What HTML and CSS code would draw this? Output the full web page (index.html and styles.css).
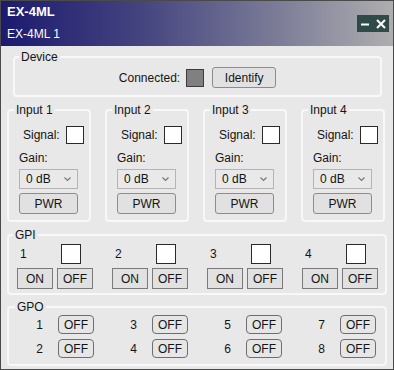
FILE: index.html
```html
<!DOCTYPE html>
<html lang="en">
<head>
    <meta charset="UTF-8">
    <meta name="viewport" content="width=device-width, initial-scale=1.0">
    <title>EX-4ML</title>
    <link rel="stylesheet" href="styles.css">
</head>
<body>
    <div class="window">
        <!-- Title bar -->
        <div class="titlebar">
            <div class="titles">
                <div class="app-name">EX-4ML</div>
                <div class="device-name">EX-4ML 1</div>
            </div>
            <div class="win-controls">
                <svg width="32" height="17" viewBox="0 0 32 17">
                    <line x1="4" y1="9.5" x2="12" y2="9.5" stroke="#fff" stroke-width="2"/>
                    <line x1="20" y1="5" x2="28" y2="13" stroke="#fff" stroke-width="2"/>
                    <line x1="28" y1="5" x2="20" y2="13" stroke="#fff" stroke-width="2"/>
                </svg>
            </div>
        </div>

        <!-- Device -->
        <fieldset class="group device">
            <legend>Device</legend>
            <div class="device-row">
                <span>Connected:</span>
                <span class="led led-off"></span>
                <button class="btn btn-round identify">Identify</button>
            </div>
        </fieldset>

        <!-- Inputs -->
        <div class="inputs">
            <fieldset class="group input">
                <legend>Input 1</legend>
                <div class="signal"><span>Signal:</span><span class="led"></span></div>
                <div class="gain-label">Gain:</div>
                <div class="select"><span>0 dB</span><svg width="7" height="5" viewBox="0 0 7 5"><polyline points="0.5,0.5 3.5,3.5 6.5,0.5" fill="none" stroke="#777" stroke-width="1.2"/></svg></div>
                <button class="btn btn-round pwr">PWR</button>
            </fieldset>
            <fieldset class="group input">
                <legend>Input 2</legend>
                <div class="signal"><span>Signal:</span><span class="led"></span></div>
                <div class="gain-label">Gain:</div>
                <div class="select"><span>0 dB</span><svg width="7" height="5" viewBox="0 0 7 5"><polyline points="0.5,0.5 3.5,3.5 6.5,0.5" fill="none" stroke="#777" stroke-width="1.2"/></svg></div>
                <button class="btn btn-round pwr">PWR</button>
            </fieldset>
            <fieldset class="group input">
                <legend>Input 3</legend>
                <div class="signal"><span>Signal:</span><span class="led"></span></div>
                <div class="gain-label">Gain:</div>
                <div class="select"><span>0 dB</span><svg width="7" height="5" viewBox="0 0 7 5"><polyline points="0.5,0.5 3.5,3.5 6.5,0.5" fill="none" stroke="#777" stroke-width="1.2"/></svg></div>
                <button class="btn btn-round pwr">PWR</button>
            </fieldset>
            <fieldset class="group input">
                <legend>Input 4</legend>
                <div class="signal"><span>Signal:</span><span class="led"></span></div>
                <div class="gain-label">Gain:</div>
                <div class="select"><span>0 dB</span><svg width="7" height="5" viewBox="0 0 7 5"><polyline points="0.5,0.5 3.5,3.5 6.5,0.5" fill="none" stroke="#777" stroke-width="1.2"/></svg></div>
                <button class="btn btn-round pwr">PWR</button>
            </fieldset>
        </div>

        <!-- GPI -->
        <fieldset class="group gpi">
            <legend>GPI</legend>
            <div class="gpi-grid">
                <div class="gpi-cell">
                    <div class="gpi-top"><span class="num">1</span><span class="led led-big"></span></div>
                    <div class="gpi-btns"><button class="btn btn-square">ON</button><button class="btn btn-square">OFF</button></div>
                </div>
                <div class="gpi-cell">
                    <div class="gpi-top"><span class="num">2</span><span class="led led-big"></span></div>
                    <div class="gpi-btns"><button class="btn btn-square">ON</button><button class="btn btn-square">OFF</button></div>
                </div>
                <div class="gpi-cell">
                    <div class="gpi-top"><span class="num">3</span><span class="led led-big"></span></div>
                    <div class="gpi-btns"><button class="btn btn-square">ON</button><button class="btn btn-square">OFF</button></div>
                </div>
                <div class="gpi-cell">
                    <div class="gpi-top"><span class="num">4</span><span class="led led-big"></span></div>
                    <div class="gpi-btns"><button class="btn btn-square">ON</button><button class="btn btn-square">OFF</button></div>
                </div>
            </div>
        </fieldset>

        <!-- GPO -->
        <fieldset class="group gpo">
            <legend>GPO</legend>
            <div class="gpo-grid">
                <div class="gpo-cell"><span class="num">1</span><button class="btn gpo-btn">OFF</button></div>
                <div class="gpo-cell"><span class="num">3</span><button class="btn gpo-btn">OFF</button></div>
                <div class="gpo-cell"><span class="num">5</span><button class="btn gpo-btn">OFF</button></div>
                <div class="gpo-cell"><span class="num">7</span><button class="btn gpo-btn">OFF</button></div>
                <div class="gpo-cell"><span class="num">2</span><button class="btn gpo-btn">OFF</button></div>
                <div class="gpo-cell"><span class="num">4</span><button class="btn gpo-btn">OFF</button></div>
                <div class="gpo-cell"><span class="num">6</span><button class="btn gpo-btn">OFF</button></div>
                <div class="gpo-cell"><span class="num">8</span><button class="btn gpo-btn">OFF</button></div>
            </div>
        </fieldset>
    </div>
</body>
</html>
```

FILE: styles.css
```css
body {
    margin: 0;
    padding: 0;
    font-family: "Liberation Sans", Arial, sans-serif;
    font-size: 12px;
    color: #141414;
    background: #ffffff;
}
.window {
    width: 394px;
    height: 370px;
    box-sizing: border-box;
    border: 1px solid #4a4a4a;
    background-color: #e8e8e8;
    overflow: hidden;
}

/* Title bar */
.titlebar {
    height: 45px;
    display: flex;
    justify-content: space-between;
    align-items: flex-start;
    padding: 0 4px 0 6px;
    background: linear-gradient(90deg, #1c1a6e 0%, #43437f 35%, #7b7b97 70%, #aeaeb0 100%);
    color: #fff;
}
.app-name {
    margin-top: 3px;
    font-size: 13px;
    font-weight: bold;
    line-height: 16px;
}
.device-name {
    margin-top: 6px;
    font-size: 12px;
    line-height: 16px;
}
.win-controls {
    margin-top: 14px;
    width: 32px;
    height: 17px;
    background-color: #2f4a48;
}
.win-controls svg {
    display: block;
}

/* Group boxes */
.group {
    margin: 0;
    padding: 0;
    min-width: 0;
    border: 2px solid #f8f8f8;
    border-radius: 4px;
}
.group legend {
    padding: 0 2px;
    font-size: 12px;
    line-height: 14px;
}

/* Device */
.device {
    margin: 4px 11px 0 12px;
    padding: 3px 0 7px;
}
.device legend {
    margin-left: 4px;
}
.device-row {
    display: flex;
    justify-content: center;
    align-items: center;
}
.device-row .led {
    margin: 0 8px 0 6px;
}

/* Leds */
.led {
    display: inline-block;
    width: 18px;
    height: 18px;
    box-sizing: border-box;
    border: 1px solid #2a2a2a;
    background-color: #fff;
}
.led-off {
    background-color: #808080;
    border-color: #3c3c3c;
}
.led-big {
    width: 20px;
    height: 20px;
}

/* Buttons */
.btn {
    font-family: "Liberation Sans", Arial, sans-serif;
    font-size: 12px;
    color: #141414;
    background-color: #e1e1e1;
    border: 1px solid #8c8c8c;
    padding: 0;
    margin: 0;
    box-sizing: border-box;
}
.btn-round {
    border-radius: 3px;
}
.identify {
    width: 64px;
    height: 21px;
}

/* Inputs */
.inputs {
    display: grid;
    grid-template-columns: repeat(4, 84px);
    column-gap: 14px;
    margin: 6px 6px 0;
}
.input {
    padding: 9px 0 6px 10px;
}
.input legend {
    margin-left: -5px;
}
.signal {
    display: flex;
    align-items: center;
    gap: 6px;
    margin-left: 4px;
    height: 18px;
}
.gain-label {
    margin-top: 7px;
    line-height: 14px;
}
.select {
    margin-top: 4px;
    width: 59px;
    height: 20px;
    box-sizing: border-box;
    border: 1px solid #b4b4b4;
    background-color: #e9e9e9;
    display: flex;
    justify-content: space-between;
    align-items: center;
    padding: 0 6px;
}
.select svg {
    display: block;
}
.pwr {
    display: block;
    margin-top: 4px;
    width: 59px;
    height: 21px;
}

/* GPI */
.gpi {
    margin: 6px 6px 0;
    padding: 2px 0 4px 8px;
}
.gpi legend {
    margin-left: -4px;
}
.gpi-grid {
    display: grid;
    grid-template-columns: repeat(4, 95px);
}
.gpi-top {
    display: flex;
    align-items: center;
    height: 20px;
}
.gpi-top .num {
    width: 41px;
    padding-left: 3px;
}
.gpi-btns {
    display: flex;
    gap: 4px;
    margin-top: 4px;
}
.btn-square {
    width: 36px;
    height: 21px;
    border-color: #7a7a7a;
}

/* GPO */
.gpo {
    margin: 5px 6px 0;
    padding: 1px 0 6px 11px;
}
.gpo legend {
    margin-left: -5px;
}
.gpo-grid {
    display: grid;
    grid-template-columns: repeat(4, 94px);
    row-gap: 5px;
}
.gpo-cell {
    display: flex;
    align-items: center;
}
.gpo-cell .num {
    width: 23px;
    margin-right: 15px;
    text-align: right;
}
.gpo-btn {
    width: 36px;
    height: 19px;
    border-radius: 4px;
    border-color: #6e6e6e;
    background-color: #e6e6e6;
}
```
